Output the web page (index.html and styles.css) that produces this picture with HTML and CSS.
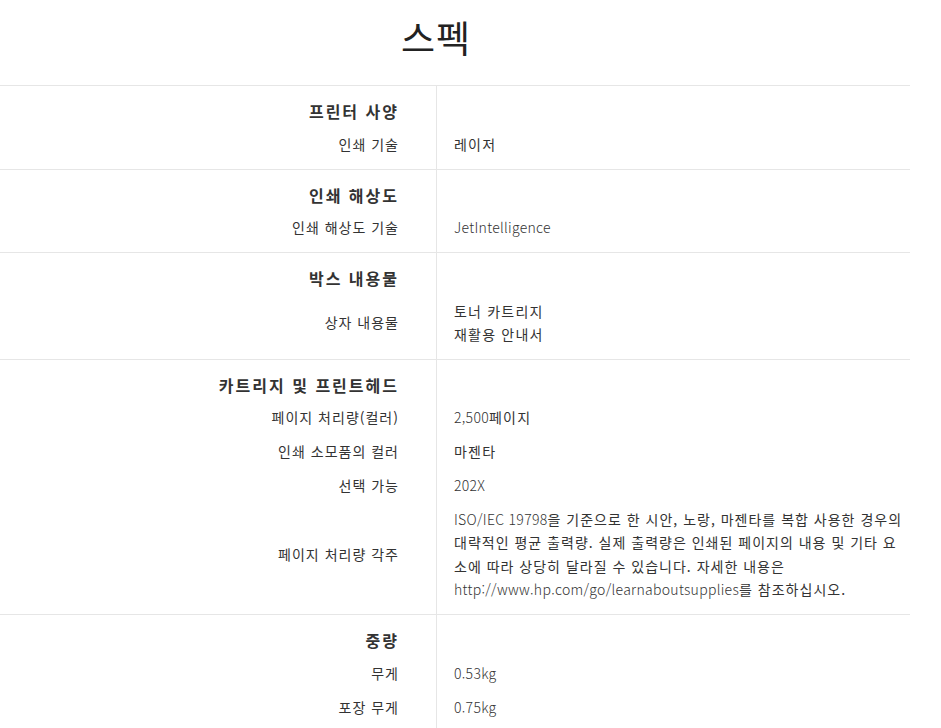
FILE: index.html
```html
<!DOCTYPE html>
<html lang="ko">
<head>
<meta charset="utf-8">
<title>스펙</title>
<link rel="stylesheet" href="styles.css">
</head>
<body>
<div class="spec">
  <h1 class="title">스펙</h1>

  <div class="section">
    <div class="sec-head">프린터 사양</div>
    <div class="label">인쇄 기술</div>
    <div class="value">레이저</div>
  </div>

  <div class="section">
    <div class="sec-head">인쇄 해상도</div>
    <div class="label">인쇄 해상도 기술</div>
    <div class="value lat">JetIntelligence</div>
  </div>

  <div class="section">
    <div class="sec-head">박스 내용물</div>
    <div class="label">상자 내용물</div>
    <div class="value">토너 카트리지<br>재활용 안내서</div>
  </div>

  <div class="section">
    <div class="sec-head">카트리지 및 프린트헤드</div>
    <div class="label">페이지 처리량(컬러)</div>
    <div class="value"><span class="lat">2,500</span>페이지</div>
    <div class="label">인쇄 소모품의 컬러</div>
    <div class="value">마젠타</div>
    <div class="label">선택 가능</div>
    <div class="value lat">202X</div>
    <div class="label">페이지 처리량 각주</div>
    <div class="value note"><span class="lat">ISO/IEC 19798</span>을 기준으로 한 시안, 노랑, 마젠타를 복합 사용한 경우의 대략적인 평균 출력량. 실제 출력량은 인쇄된 페이지의 내용 및 기타 요소에 따라 상당히 달라질 수 있습니다. 자세한 내용은 <span class="lat">http://www.hp.com/go/learnaboutsupplies</span>를 참조하십시오.</div>
  </div>

  <div class="section">
    <div class="sec-head">중량</div>
    <div class="label">무게</div>
    <div class="value lat">0.53kg</div>
    <div class="label">포장 무게</div>
    <div class="value lat">0.75kg</div>
  </div>
</div>
</body>
</html>
```

FILE: styles.css
```css
html, body {
  margin: 0;
  padding: 0;
  background: #fff;
}

body {
  font-family: "Noto Sans CJK KR", "Noto Sans", sans-serif;
  color: #333;
}

.spec {
  width: 910px;
}

.title {
  box-sizing: border-box;
  width: 910px;
  height: 86px;
  margin: 0;
  padding: 12px 38px 0 0;
  text-align: center;
  font-size: 37px;
  font-weight: 400;
  line-height: 50px;
  letter-spacing: 1px;
  color: #222;
  border-bottom: 1px solid #e6e6e6;
}

.section {
  display: grid;
  grid-template-columns: 436px 1fr;
  padding: 9px 0 7.5px;
  border-bottom: 1px solid #e6e6e6;
  background: linear-gradient(#e6e6e6, #e6e6e6) 436px 0 / 1px 100% no-repeat;
}

.sec-head {
  grid-column: 1;
  text-align: right;
  padding-right: 37px;
  font-size: 16px;
  font-weight: 700;
  line-height: 32px;
  letter-spacing: 2px;
  color: #333;
}

.label {
  grid-column: 1;
  display: flex;
  align-items: center;
  justify-content: flex-end;
  padding: 5.5px 37px 5.5px 0;
  font-size: 14px;
  line-height: 23px;
  letter-spacing: 1px;
}

.value {
  grid-column: 2;
  padding: 5.5px 4px 5.5px 18px;
  font-size: 14px;
  line-height: 23px;
  letter-spacing: 1.2px;
}

.note {
  letter-spacing: 1px;
  line-height: 23.25px;
}

.lat {
  font-weight: 300;
  letter-spacing: 0.3px;
}
```
